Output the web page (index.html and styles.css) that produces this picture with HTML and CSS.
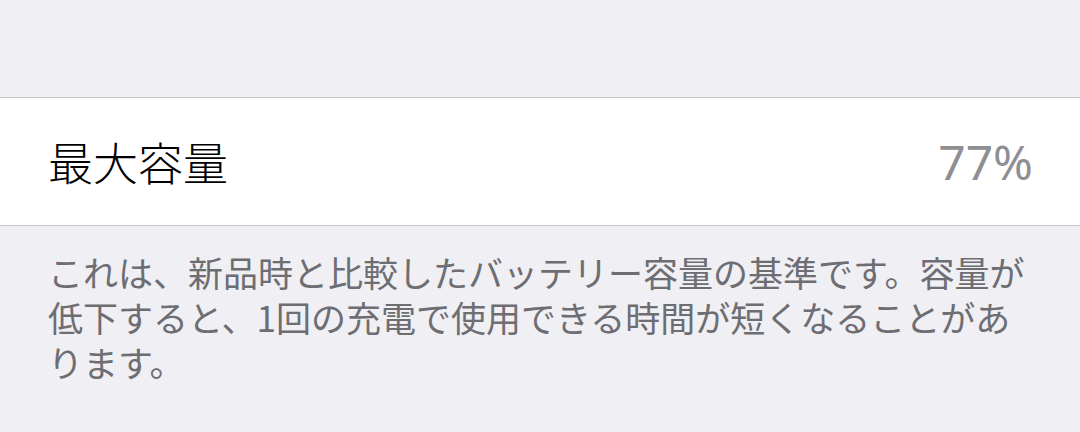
FILE: index.html
```html
<!DOCTYPE html>
<html lang="ja">
<head>
	<meta charset="UTF-8">
	<title>バッテリーの状態</title>
	<link rel="stylesheet" href="styles.css">
</head>
<body>
	<div class="page">
		<div class="group">
			<div class="row">
				<span class="row-title">最大容量</span>
				<span class="row-value">77%</span>
			</div>
		</div>
		<p class="footer">これは、新品時と比較したバッテリー容量の基準です。容量が低下すると、1回の充電で使用できる時間が短くなることがあります。</p>
	</div>
</body>
</html>
```
FILE: styles.css
```css
*{
	margin: 0;
	padding: 0;
	box-sizing: border-box;
}
body{
	background: #efeff4;
	font-family: "Noto Sans CJK JP", "Noto Sans", sans-serif;
}
.page{
	padding-top: 97px;
}
.group{
	background: #fff;
	border-top: 1px solid #c8c7cc;
	border-bottom: 1px solid #c8c7cc;
}
.row{
	height: 127px;
	display: flex;
	align-items: center;
	justify-content: space-between;
	padding: 0 47px 0 48px;
}
.row-title{
	font-size: 45px;
	font-weight: 300;
	color: #000;
}
.row-value{
	font-family: "Noto Sans", sans-serif;
	font-size: 48px;
	color: #8e8e93;
}
.footer{
	padding: 23px 46px 0 48px;
	font-size: 35px;
	line-height: 45px;
	color: #6d6d72;
}
```
